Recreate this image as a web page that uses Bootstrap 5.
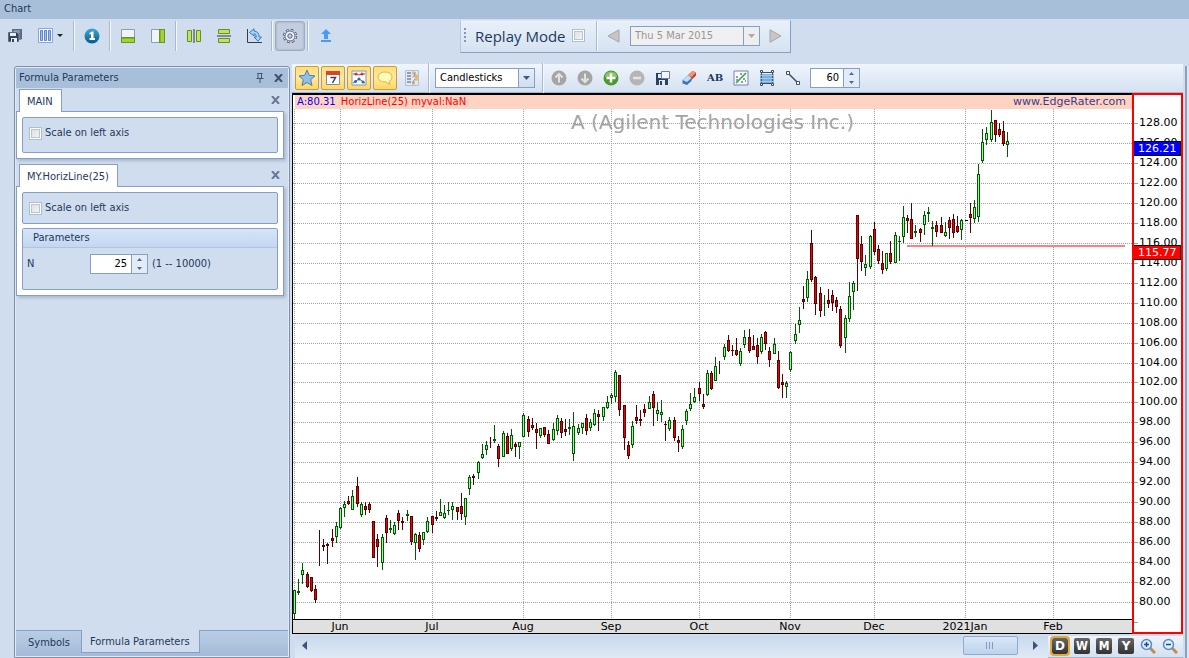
<!DOCTYPE html>
<html lang="en">
<head>
<meta charset="utf-8">
<meta name="viewport" content="width=device-width, initial-scale=1">
<title>Chart</title>
<link href="https://cdn.jsdelivr.net/npm/bootstrap@5.3.0/dist/css/bootstrap.min.css" rel="stylesheet">
<style>
:root{--line:#869fc4;--pane:#d0ddee;--bar:#a8bfda;--ink:#1e395b}
body{background:var(--pane);color:var(--ink);font:11px/16px "DejaVu Sans Condensed","DejaVu Sans",sans-serif;min-height:100vh;overflow:hidden}
button{color:inherit;font:inherit}
.titlebar{background:var(--bar);height:19px;padding:1px 4px}
.topbar{height:45px;padding-top:2px}
.tool{width:30px;height:30px;border:0;background:none;padding:0;display:flex;align-items:center;justify-content:center;flex:none}
.tool.wide{width:41px}
.tool.slim{width:26px}
.tool.pressed{background:#c3cfe1;border:1px solid #9dabc0;border-radius:3px;box-shadow:inset 0 0 3px #9aa8bd}
.rule{width:7px;height:30px;flex:none;display:flex;justify-content:center}
.rule::before{content:"";width:2px;border-left:1px solid #aab9d0;border-right:1px solid #f4f8fd}
.topbar>.rule{width:6px}
.replay{height:33px;margin:-1px 0 0 119px;border:1px solid var(--line);border-color:#dfe8f4 var(--line) var(--line) #b7c7dd;background:linear-gradient(#e9f1fa,#d5e2f1);padding-bottom:2px}
.grip{width:2px;height:16px;margin:0 9px 0 3px;background:repeating-linear-gradient(#8396b4 0 2px,transparent 2px 4px)}
.replay label{font:15px/20px "Open Sans","Noto Sans",sans-serif;width:97px}
.tick{appearance:none;width:13px;height:13px;margin:0;border:1px solid #a9bedb;background:linear-gradient(135deg,#d9dde2,#f7f7f7);box-shadow:inset 0 0 0 1px #fff,inset 0 0 0 2px #c0c4ca;flex:none}
.field{height:20px;border:1px solid var(--line);background:#fff;display:flex;flex:none}
.field input,.field select{border:0;background:none;padding:0 4px;min-width:0;flex:1;color:#000;appearance:none;font:inherit;outline:0}
.drop{width:16px;border:0;border-left:1px solid var(--line);padding:0;background:linear-gradient(#e6effa,#d0deee);display:flex;align-items:center;justify-content:center}
.drop.grey{background:#eee}
.field.datebox{width:130px;background:#f0f0f0}
.field.datebox input{color:#979797}
.styles{width:100px;margin-left:3px}
.barcount{width:50px}
.period-n{width:58px}
.updown{width:16px;border-left:1px solid var(--line);background:#e2ecf8;display:flex;flex-direction:column}
.updown button{flex:1;border:0;padding:0;background:none;line-height:0}
.num{text-align:right}
.dock{width:276px;border:1px solid #7c8fad;border-radius:3px 3px 0 0;padding:1px;margin:2px 2px 0 14px;flex:none;box-shadow:inset 0 0 0 1px #e0e9f4}
.dockhead{background:var(--bar);height:20px;padding:0 1px 0 3px}
.glyph{border:0;background:none;padding:0;width:18px;height:16px;line-height:0}
.sheet{width:268px;margin-bottom:4px}
.sheettab{font-size:11px;line-height:16px;font-weight:400;color:inherit;border:1px solid var(--line);border-bottom:0;background:#fff;height:23px;padding:4px 8px 2px 7px;margin:1px 0 -1px 3px;position:relative;z-index:1}
.sheetbody{border:1px solid var(--line);background:#fff;padding:5px;box-shadow:2px 2px 3px #a9b8cc}
.group{border:1px solid var(--line);border-radius:2px;background:var(--pane)}
.scale{padding:7px 6px;gap:3px}
.grouphead{height:19px;padding:1px 10px;border-bottom:1px solid #afc4e3;background:linear-gradient(#d5e5f6,#c3d7f1)}
.nrow{padding:6px 4px 15px}
.nlabel{width:63px}
.docktabs{background:linear-gradient(#b9cee5,#a5bad7);height:26px;border-top:1px solid var(--line)}
.docktab{border:0;background:none;height:22px;padding:2px 12px 0;width:65px;text-align:left}
.docktab.on{background:var(--pane);border:1px solid var(--line);border-top:0;width:119px;margin-top:-1px;height:23px;padding:2px 8px 0}
.pane-col{min-width:0}
.pane-row{min-height:0}
.chartbar{height:29px;background:linear-gradient(#f0f5fc,#d4e1f1);border-bottom:1px solid #a4b7d1;padding:0 2px 0 3px}
.chip{width:26px;height:26px;border:0;background:none;padding:0;display:flex;align-items:center;justify-content:center;flex:none}
.chip.lit{width:24px;height:24px;margin-right:2px;border:1px solid #c99b3c;border-radius:2px;background:linear-gradient(#ffdf7c,#ffe89e 50%,#ffd760)}
.chip.note{font:bold 10px/16px "DejaVu Serif",serif;letter-spacing:normal}
.chartfont{font-family:"DejaVu Sans",sans-serif}
.plot{border:solid #000;border-width:2px 0 1px 1px;background:#fff;min-width:0}
.legend{height:14px;line-height:14px;background:#ffd3c1;margin-left:2px;padding:0 6px 0 2px}
.readout{font-size:10px;color:#f00}
.readout b{font-weight:400;color:#00f;margin-right:2px}
.site{color:#3c3c8c}
.timeline{height:14px;background:#e0e0e0;border-top:1px solid #000;flex:none}
.prices{width:51px;border:2px solid #f00;background:#fff;flex:none}
svg{display:block;flex:none}
.canvas{width:100%;height:100%;overflow:hidden}
.footer-bar{height:24px;padding-top:2px}
.track{background:linear-gradient(#c9daee,#dfe9f5);margin-left:3px}
.thumb{width:55px;height:19px;border:1px solid #8fabd0;border-radius:2px;background:linear-gradient(#d9e7f7,#bdd2ec);padding:0}
.arrow{border:0;background:none;padding:0;width:18px;height:19px;display:flex;align-items:center;justify-content:center}
.arrow.right{width:26px}
.periods{background:linear-gradient(#eef4fb,#d4e1f1);width:135px;padding-left:1px;border-bottom:1px solid #a4b7d1}
.period{width:22px;height:20px;border:0;background:none;padding:0;display:flex;align-items:center;justify-content:center}
.period b{width:16px;height:16px;border-radius:2px;background:linear-gradient(#666,#333);color:#fff;font:bold 12px/16px "DejaVu Sans",sans-serif;text-align:center}
.period.on b{outline:2px solid #e2ab35}
.period .narrow{font-family:"DejaVu Sans Condensed",sans-serif}
.edge{width:4px;margin:2px 0 0 2px;border-left:2px solid #8c9fbb;background:#dce7f4;flex:none}
</style>
</head>
<body class="d-flex flex-column vh-100">
<header class="titlebar flex-shrink-0">Chart</header>

<nav class="topbar d-flex flex-shrink-0 align-items-start" aria-label="Chart tools">
 <button class="tool" aria-label="Save all"><svg width="16" height="16" viewBox="0 0 16 16"><path d="M5 1h10v10l-2 1H5z" fill="#5c6b84"/><path d="M7 2h6v3H7z" fill="#8492a8"/><path d="M1 4h9l2 2v8H1z" fill="#34435c" stroke="#d0ddee" stroke-width=".5"/><path d="M3 5h6v3H3zM4 10h6v4H4z" fill="#e6edf7"/><path d="M5 11h2v3H5z" fill="#34435c"/></svg></button>
 <button class="tool wide" aria-label="Columns"><svg width="26" height="16" viewBox="0 0 26 16"><path d="M.5.5h14v14H.5z" fill="#f3f8fe" stroke="#8aa6cf"/><path d="M2.500 2.500h2v10h-2zM6.500 2.500h2v10h-2zM10.500 2.500h2v10h-2z" fill="#9fc0ea" stroke="#5d88c4"/><path d="M19 6h6l-3 3z" fill="#222"/></svg></button>
 <span class="rule"></span>
 <button class="tool" aria-label="One"><svg width="16" height="16" viewBox="0 0 16 16"><defs><linearGradient id="orb" x2="0" y2="1"><stop stop-color="#41a9d2"/><stop offset="1" stop-color="#04598c"/></linearGradient></defs><circle cx="8" cy="8" r="7.500" fill="url(#orb)"/><path d="M5.500 5 8 3.500h1.500V10H11v2H5.500v-2H7V6L5.500 6.500z" fill="#fff"/></svg></button>
 <span class="rule"></span>
 <button class="tool" aria-label="Bottom pane"><svg width="14" height="14" viewBox="0 0 14 14"><path d="M.5.5h13v13H.5z" fill="#eef4fa" stroke="#8a9cb7"/><path d="M0 8h14v6H0z" fill="#689713"/><path d="M1 9.500h12V13H1z" fill="#a4d336"/></svg></button>
 <button class="tool" aria-label="Side pane"><svg width="14" height="14" viewBox="0 0 14 14"><path d="M.5.5h13v13H.5z" fill="#eef4fa" stroke="#8a9cb7"/><path d="M8 0h6v14H8z" fill="#689713"/><path d="M9.500 1H13v12H9.500z" fill="#a4d336"/></svg></button>
 <span class="rule"></span>
 <button class="tool" aria-label="Split vertically"><svg width="14" height="14" viewBox="0 0 14 14"><path d="M.5 1.500h4v11h-4zM9.500 1.500h4v11h-4z" fill="#bfe36a" stroke="#669018"/><path d="M6.500 0h1v14h-1z" fill="#333"/></svg></button>
 <button class="tool" aria-label="Split horizontally"><svg width="14" height="14" viewBox="0 0 14 14"><path d="M1.500.5h11v4h-11zM1.500 9.500h11v4h-11z" fill="#bfe36a" stroke="#669018"/><path d="M0 6.500h14v1H0z" fill="#333"/></svg></button>
 <button class="tool" aria-label="Reset axis"><svg width="16" height="16" viewBox="0 0 16 16"><path d="M1.500 1v13.500H16" fill="none" stroke="#2f3e55"/><path d="M3.500 4.500 8 .8V3q5 .5 5.200 6h2.300L12 13.200 8 9h2.300Q10.300 6 8 5.700V8z" fill="#a8d3f3" stroke="#3a7ab5"/></svg></button>
 <span class="rule"></span>
 <button class="tool pressed" aria-label="Formula parameters"><svg width="16" height="16" viewBox="0 0 16 16"><circle cx="8" cy="8" r="5.900" fill="none" stroke="#56627a" stroke-width="2.600" stroke-dasharray="2.600 2.034"/><circle cx="8" cy="8" r="5.700" fill="none" stroke="#f2f5fa" stroke-width="1.200" stroke-dasharray="1.400 3.077" stroke-dashoffset="-.6"/><circle cx="8" cy="8" r="5" fill="#eef2f8" stroke="#66718a"/><circle cx="8" cy="8" r="2.200" fill="#c3cfe1" stroke="#56627a"/></svg></button>
 <span class="rule"></span>
 <button class="tool" aria-label="Upload"><svg width="12" height="14" viewBox="0 0 12 14"><path d="M6 0 11 5H8v5H4V5H1zM1 11h10v2H1z" fill="#4a9bf3"/></svg></button>
 <div class="replay d-flex align-items-center">
  <span class="grip"></span><label for="replay">Replay Mode</label><input id="replay" type="checkbox" class="tick">
  <span class="rule ms-2"></span>
  <button class="tool slim" aria-label="Previous day"><svg width="13" height="14" viewBox="0 0 13 14"><path d="M12 .8v12.400L1 7z" fill="#c6c6c6" stroke="#a6a6a6"/></svg></button>
  <div class="field datebox ms-1"><input value="Thu 5 Mar 2015" aria-label="Replay date" disabled><button class="drop grey" aria-label="Open calendar" disabled><svg width="7" height="4"><path d="M0 0h7L3.500 4z" fill="#aaa"/></svg></button></div>
  <button class="tool" aria-label="Next day"><svg width="13" height="14" viewBox="0 0 13 14"><path d="M1 .8v12.400L12 7z" fill="#c6c6c6" stroke="#a6a6a6"/></svg></button>
 </div>
</nav>

<main class="d-flex flex-fill pane-row">
 <aside class="dock d-flex flex-column">
  <div class="dockhead d-flex align-items-center"><span class="me-auto">Formula Parameters</span>
   <button class="glyph" aria-label="Pin"><svg width="8" height="10" viewBox="0 0 8 10" class="mx-auto"><path d="M2 0v5.500M5.500 0v5.500M1.500.5h5M.5 5.500h7M4 6v4" fill="none" stroke="#3d5275"/></svg></button>
   <button class="glyph" aria-label="Close"><svg width="9" height="8" viewBox="0 0 9 8" class="mx-auto"><path d="m1 0 7 8M8 0 1 8" stroke="#42506b" stroke-width="2"/></svg></button></div>
  <section class="sheet">
   <div class="d-flex"><h2 class="sheettab">MAIN</h2><button class="glyph ms-auto mt-1" aria-label="Close MAIN"><svg width="9" height="8" viewBox="0 0 9 8" class="mx-auto"><path d="m1 0 7 8M8 0 1 8" stroke="#66779a" stroke-width="2"/></svg></button></div>
   <div class="sheetbody"><div class="group"><div class="scale d-flex align-items-center mb-1"><input type="checkbox" id="left1" class="tick"><label for="left1">Scale on left axis</label></div></div></div>
  </section>
  <section class="sheet">
   <div class="d-flex"><h2 class="sheettab">MY.HorizLine(25)</h2><button class="glyph ms-auto mt-1" aria-label="Close MY.HorizLine"><svg width="9" height="8" viewBox="0 0 9 8" class="mx-auto"><path d="m1 0 7 8M8 0 1 8" stroke="#66779a" stroke-width="2"/></svg></button></div>
   <div class="sheetbody"><div class="group mb-1"><div class="scale d-flex align-items-center"><input type="checkbox" id="left2" class="tick"><label for="left2">Scale on left axis</label></div></div>
    <div class="group"><div class="grouphead">Parameters</div>
     <div class="d-flex align-items-center nrow"><label class="nlabel" for="nval">N</label>
      <div class="field period-n"><input id="nval" class="num" value="25"><span class="updown"><button aria-label="Increase N"><svg width="5" height="3" class="mx-auto"><path d="M0 3h5L2.500 0z" fill="#56678a"/></svg></button><button aria-label="Decrease N"><svg width="5" height="3" class="mx-auto"><path d="M0 0h5L2.500 3z" fill="#56678a"/></svg></button></span></div><span class="ms-1">(1 -- 10000)</span></div></div></div>
  </section>
  <div class="docktabs d-flex mt-auto align-items-start"><button class="docktab">Symbols</button><button class="docktab on">Formula Parameters</button></div>
 </aside>

 <section class="d-flex flex-column flex-fill pane-col">
  <div class="chartbar d-flex align-items-center flex-shrink-0">
   <button class="chip lit" aria-label="Favourites"><svg width="18" height="18" viewBox="0 0 18 18"><path d="m9 1 2.300 5.300 5.700.6-4.300 3.800L14 16.500 9 13.500l-5 3 1.300-5.800L1 6.900l5.700-.6z" fill="#8fc0e8" stroke="#4d7daf"/></svg></button>
   <button class="chip lit" aria-label="Calendar"><svg width="14" height="14" viewBox="0 0 14 14"><path d="M.5.5h13v13H.5z" fill="#fff" stroke="#7d8ca5"/><path d="M0 0h14v4H0z" fill="#d5452f"/><path d="M4.500 6.500h5L6.500 12" fill="none" stroke="#33435e" stroke-width="1.500"/></svg></button>
   <button class="chip lit" aria-label="Indicators"><svg width="16" height="16" viewBox="0 0 16 16"><path d="M1 1h14v14H1z" fill="#fff" stroke="#8794ab"/><path d="M2 4h3l3 1 3-1h3" fill="none" stroke="#c33"/><g fill="#c33"><circle cx="5" cy="4" r="1.500"/><circle cx="11" cy="4" r="1.500"/></g><path d="m2 13 3-2 3-2 3 2 3 2" fill="none" stroke="#2869b5"/><g fill="#2869b5"><circle cx="4.500" cy="11.500" r="1.500"/><circle cx="8" cy="9" r="1.500"/><circle cx="12" cy="12" r="1.500"/></g></svg></button>
   <button class="chip lit" aria-label="Comments"><svg width="16" height="14" viewBox="0 0 16 14"><path d="M8 1c4 0 7 2 7 5s-2 4-3 4.500l1 3-4-2.500C4 11 1 9 1 6s3-5 7-5z" fill="#fffbb8" stroke="#d9b742"/></svg></button>
   <button class="chip" aria-label="Data table"><svg width="14" height="16" viewBox="0 0 14 16"><path d="M.5.500h13v15H.5z" fill="#e3e8ef" stroke="#b4bfd0"/><path d="M2 3h4M2 6h4M2 9h4M2 12h4" stroke="#93a0b6" stroke-width="2"/><path d="M7 3h3M9 6h4M10 9h3M7 13h3" stroke="#e8b878" stroke-width="3"/><path d="M10 2v3L7.500 7M10 9l-2 3v2" fill="none" stroke="#7d95bb"/></svg></button>
   <span class="rule"></span>
   <div class="field styles position-relative"><select aria-label="Chart style"><option>Candlesticks</option></select><span class="drop position-absolute top-0 bottom-0 end-0 pe-none"><svg width="7" height="4"><path d="M0 0h7L3.500 4z" fill="#43587c"/></svg></span></div>
   <span class="rule ms-1"></span>
   <button class="chip" aria-label="Move up"><svg width="16" height="16" viewBox="0 0 16 16"><circle cx="8" cy="8" r="7.500" fill="#a5a5a5"/><path d="M8 12.500V4M4.500 7.500 8 4l3.500 3.500" fill="none" stroke="#e2e2e2" stroke-width="2"/></svg></button>
   <button class="chip" aria-label="Move down"><svg width="16" height="16" viewBox="0 0 16 16"><circle cx="8" cy="8" r="7.500" fill="#a5a5a5"/><path d="M8 3.500V12M4.500 8.500 8 12l3.500-3.500" fill="none" stroke="#e2e2e2" stroke-width="2"/></svg></button>
   <button class="chip" aria-label="Add"><svg width="16" height="16" viewBox="0 0 16 16"><circle cx="8" cy="8" r="7.500" fill="#4b9b2c"/><path d="M2 7a6 5.500 0 0 1 12 0z" fill="#89c46c"/><path d="M8 3.500v9M3.500 8h9" stroke="#fff" stroke-width="2.500"/></svg></button>
   <button class="chip" aria-label="Remove"><svg width="16" height="16" viewBox="0 0 16 16"><circle cx="8" cy="8" r="7.500" fill="#b5b5b5"/><path d="M4 8h8" stroke="#e4e4e4" stroke-width="2.500"/></svg></button>
   <button class="chip" aria-label="Save layout"><svg width="16" height="16" viewBox="0 0 16 16"><path d="M1 3h12v12H1z" fill="#2d405f"/><path d="M4 10h6v5H4zM3 4h5v4H3z" fill="#dfe9f6"/><path d="M5 11h2v4H5z" fill="#2d405f"/><path d="M6.500 1.500h8v7h-8z" fill="#f5f8fd" stroke="#6d82a5"/></svg></button>
   <button class="chip" aria-label="Erase"><svg width="16" height="16" viewBox="0 0 16 16"><path d="M7 5 11.500 1 15 2.500v3L10.500 10z" fill="#cf4425"/><path d="M7 5 11.500 1 15 2.500 10.500 7z" fill="#f0977a"/><path d="m7 5 3.500 3v3L6 15l-4.500-1.500V10z" fill="#3b77bd"/><path d="m7 5 3.500 3-4.500 4-4.500-2z" fill="#c3dcf4"/></svg></button>
   <button class="chip note" aria-label="Text note">AB</button>
   <button class="chip" aria-label="Trend scatter"><svg width="16" height="16" viewBox="0 0 16 16"><path d="M1 1h14v14H1z" fill="#f6f9fe" stroke="#7086a8"/><path d="M3 13 13 3" stroke="#3f9a25" stroke-width="1.500"/><path d="M3 6h2v2H3zM7 3h2v2H7zM3 9h2v2H3zM10 8h2v2h-2zM8 11h2v2H8zM12 10h1v2h-1z" fill="#889dc0"/></svg></button>
   <button class="chip" aria-label="Levels"><svg width="16" height="16" viewBox="0 0 16 16"><path d="M2.500 2.500h11v11h-11z" fill="none" stroke="#3f4e66"/><path d="M1 5.500h14M1 8.500h14M1 11.500h14" stroke="#2d6dad" stroke-width="2"/><path d="M1 5.500h14M1 8.500h14M1 11.500h14" stroke="#9accf0"/><path d="M1.500.5h2v2h-2zM12.500.5h2v2h-2zM1.500 13.500h2v2h-2zM12.500 13.500h2v2h-2z" fill="#fff" stroke="#3f4e66"/></svg></button>
   <button class="chip" aria-label="Line"><svg width="16" height="16" viewBox="0 0 16 16"><path d="m3 3 10 10" stroke="#3f4e66" stroke-width="1.500"/><path d="M1.500 1.500h3v3h-3zM11.500 11.500h3v3h-3z" fill="#fff" stroke="#3f4e66"/></svg></button>
   <div class="field barcount ms-1"><input class="num" value="60" aria-label="Bars"><span class="updown"><button aria-label="More bars"><svg width="5" height="3" class="mx-auto"><path d="M0 3h5L2.500 0z" fill="#56678a"/></svg></button><button aria-label="Fewer bars"><svg width="5" height="3" class="mx-auto"><path d="M0 0h5L2.500 3z" fill="#56678a"/></svg></button></span></div>
  </div>

  <div class="d-flex flex-fill chartfont pane-row">
   <div class="plot d-flex flex-column flex-fill">
    <div class="legend d-flex justify-content-between flex-shrink-0"><span class="readout"><b>A:80.31</b> HorizLine(25) myval:NaN</span><span class="site">www.EdgeRater.com</span></div>
    <div class="flex-fill pane-row"><svg id="candles" class="canvas" shape-rendering="crispEdges"></svg></div>
    <div class="timeline"><svg id="months" class="canvas"></svg></div>
   </div>
   <div class="prices"><svg id="scale" class="canvas"></svg></div>
  </div>

  <div class="footer-bar d-flex flex-shrink-0">
   <div class="track d-flex flex-fill"><button class="arrow me-auto" aria-label="Scroll left"><svg width="5" height="9"><path d="M5 0v9L0 4.500z" fill="#43517a"/></svg></button><button class="thumb" aria-label="Scroll position"><svg width="9" height="7" class="mx-auto"><path d="M.5 0v7M3.500 0v7M6.500 0v7" stroke="#829cc4"/></svg></button><button class="arrow right ms-1" aria-label="Scroll right"><svg width="5" height="9"><path d="M0 0v9l5-4.500z" fill="#43517a"/></svg></button></div>
   <div class="periods d-flex"><button class="period on" aria-label="Daily"><b>D</b></button><button class="period" aria-label="Weekly"><b class="narrow">W</b></button><button class="period" aria-label="Monthly"><b class="narrow">M</b></button><button class="period" aria-label="Yearly"><b>Y</b></button>
    <button class="period" aria-label="Zoom in"><svg width="16" height="16" viewBox="0 0 16 16"><path d="m10 10 5 5" stroke="#c48b4d" stroke-width="3"/><circle cx="6.500" cy="6.500" r="5" fill="#e0eefb" stroke="#5a8dcb" stroke-width="1.500"/><path d="M6.500 4v5M4 6.500h5" stroke="#1c4b94" stroke-width="1.500"/></svg></button>
    <button class="period" aria-label="Zoom out"><svg width="16" height="16" viewBox="0 0 16 16"><path d="m10 10 5 5" stroke="#c48b4d" stroke-width="3"/><circle cx="6.500" cy="6.500" r="5" fill="#e0eefb" stroke="#5a8dcb" stroke-width="1.500"/><path d="M4 6.500h5" stroke="#1c4b94" stroke-width="1.500"/></svg></button></div>
  </div>
 </section>
 <div class="edge"></div>
</main>

<script src="https://cdn.jsdelivr.net/npm/bootstrap@5.3.0/dist/js/bootstrap.bundle.min.js"></script>
<script>
// One session per entry: colour, then high, body top, body bottom and low on the canvas.
const sessions = `g590 590 614 619,g579 591 593 595,g563 570 575 584,r572 574 587 588,r577 577 591 592,r585 589 600 603,r530 548 548 566,r539 545 547 551,r543 544 546 564,r529 538 541 547,g522 526 537 543
g507 508 528 529,g501 504 508 517,r496 501 504 505,g490 496 510 510,r477 486 504 507,g502 504 515 517,r502 506 510 515,r502 504 510 513,r521 521 558 558,r534 539 547 567,g534 537 563 570,r515 518 533 543,g520 528 530 533,g522 525 534 535,r510 513 521 530,r517 521 523 530,g510 514 516 521,r516 516 542 545,g533 534 543 560,r532 535 549 552,g532 532 540 545,g517 521 532 533
r516 516 525 533,r511 517 519 521,g499 512 516 516,g505 513 518 519,g502 510 511 515,g502 506 510 520,r507 507 512 520,r493 506 514 520,g498 498 517 525,g475 477 489 495,r474 476 478 485,g461 462 473 479,g444 454 458 459,g441 445 450 455,r437 447 447 448,g425 439 441 443,r444 446 459 467,g431 433 457 457,r433 436 454 454,g429 435 449 451,r442 444 447 457,g442 442 447 459
g413 415 437 437,r416 419 432 437,r418 425 428 430,r423 429 433 449,g428 428 436 438,r427 427 435 437,r430 434 444 444,g423 429 440 441,g415 418 431 435,r418 421 433 438,r419 429 432 436,g419 427 429 435,g412 426 454 461,g424 428 433 435,g423 423 428 434,r414 418 431 435,g419 422 428 431,g409 413 425 426,r410 414 417 431,g407 407 417 421,g396 402 408 409
g393 395 398 404,g370 372 397 402,r375 375 410 416,r405 405 438 450,r441 445 456 459,g421 426 445 448,r405 417 421 424,r410 419 421 426,r404 409 413 417,g396 402 409 409,r391 394 408 426,g402 410 414 421,g400 412 415 422,r421 424 425 441,g417 420 429 431,r417 420 438 441,r436 440 443 452,g425 429 447 449,g409 411 421 425,g393 404 409 411,g388 397 402 403
r382 388 394 401,r394 404 407 409,g370 373 395 396,r371 373 389 390,g357 366 381 381,r361 370 370 374,g344 347 357 360,r335 340 351 352,r345 350 351 356,r338 350 355 356,g348 351 364 366,g330 337 345 348,r329 337 351 353,r335 346 350 350,r338 345 357 364,g334 337 352 354,r331 332 344 350,r347 351 360 367,g338 344 354 354,r351 360 388 389,r374 382 385 398,g381 383 387 398
g351 352 370 372,g324 334 341 344,g307 320 325 333,r286 299 302 309,g271 279 298 302,r230 243 280 282,r276 277 304 315,r287 293 311 317,g295 300 300 316,r289 300 304 308,r290 295 303 311,r297 300 307 313,r306 309 346 348,g315 318 338 353,g282 296 319 322,g281 283 292 310,r215 215 259 291,r236 244 262 271,g255 264 268 276,g235 236 267 269
r222 229 252 255,r245 249 261 264,r251 263 270 274,g253 253 269 271,r241 253 262 264,g232 235 263 263,g236 241 242 261,g206 217 237 243,r215 218 221 233,r203 219 239 239,g225 231 233 237,r228 229 233 242,g211 215 225 235,g207 212 214 222,g221 227 229 246,r221 225 232 237,r217 225 233 233,g222 232 236 237,r217 220 228 239,r214 219 233 238,r216 226 232 233,g219 220 230 240
k220 220 221 221,r203 214 218 233,g200 207 219 223,g164 174 217 222,g129 142 161 163,g127 133 140 145,g110 122 140 142,r120 120 135 142,r123 129 135 137,r121 131 144 146,g132 141 145 157`.split(/[,\n]/);
const LEFT = 293, TOP = 109, PITCH = 4.171;
const edge = {g:'#005a00', r:'#5a0000', k:'#000'}, fill = {g:'#90ff90', r:'#f00000', k:'#000'};
const rect = (x, y, w, h, c) => h > 0 ? `<rect x="${x}" y="${y}" width="${w}" height="${h}" fill="${c}"/>` : '';
const months = [['Jun',340],['Jul',432],['Aug',523],['Sep',611],['Oct',699],['Nov',790],['Dec',874],['2021Jan',965],['Feb',1053]];
const priceY = p => Math.round(123 + (128 - p) * 9.98);

let art = '';
for (let p = 128; p >= 80; p -= 2) {
  const y = priceY(p) - TOP + 0.5;
  art += `<line x1="0" x2="100%" y1="${y}" y2="${y}" stroke="#a0a0a0" stroke-dasharray="1 1"/>`;
}
for (const x of [294, ...months.map(m => m[1])])
  art += `<line x1="${x - LEFT + .5}" x2="${x - LEFT + .5}" y1="0" y2="100%" stroke="#a0a0a0" stroke-dasharray="1 1"/>`;
art += '<text x="50%" y="20" text-anchor="middle" font-size="20" fill="#a3a3a3">A (Agilent Technologies Inc.)</text>';
art += rect(907 - LEFT, 245 - TOP, 218, 2, '#ff8080');
sessions.forEach((s, i) => {
  const k = s[0], [hi, top, bot, lo] = s.slice(1).split(' ').map(v => v - TOP);
  const x = Math.round(294 + i * PITCH) - LEFT;
  art += rect(x, hi, 1, lo - hi, edge[k]);
  art += rect(x - 1, top, 3, bot - top, edge[k]) + rect(x, top + 1, 1, bot - top - 2, fill[k]);
});
document.getElementById('candles').innerHTML = art;

document.getElementById('months').innerHTML = months.map(([n, x]) =>
  `<text x="${x - LEFT}" y="10" text-anchor="middle" font-size="11">${n}</text>`).join('');

const AXIS = 95;
let marks = '';
for (let p = 128; p >= 78; p -= 2) {
  const y = priceY(p) - AXIS;
  marks += rect(0, y, 4, 1, '#a0a0a0');
  if (p > 78) marks += `<text x="5" y="${y + 3}" font-size="11">${p}.00</text>`;
}
for (const [v, y, c] of [['126.21', 141, '#00f'], ['115.77', 245, '#f00']])
  marks += `<rect x="-.5" y="${y - AXIS + .5}" width="47" height="14" fill="${c}" stroke="#000"/><text x="4" y="${y - AXIS + 11}" font-size="11" fill="#fff">${v}</text>`;
document.getElementById('scale').innerHTML = marks;
</script>
</body>
</html>
